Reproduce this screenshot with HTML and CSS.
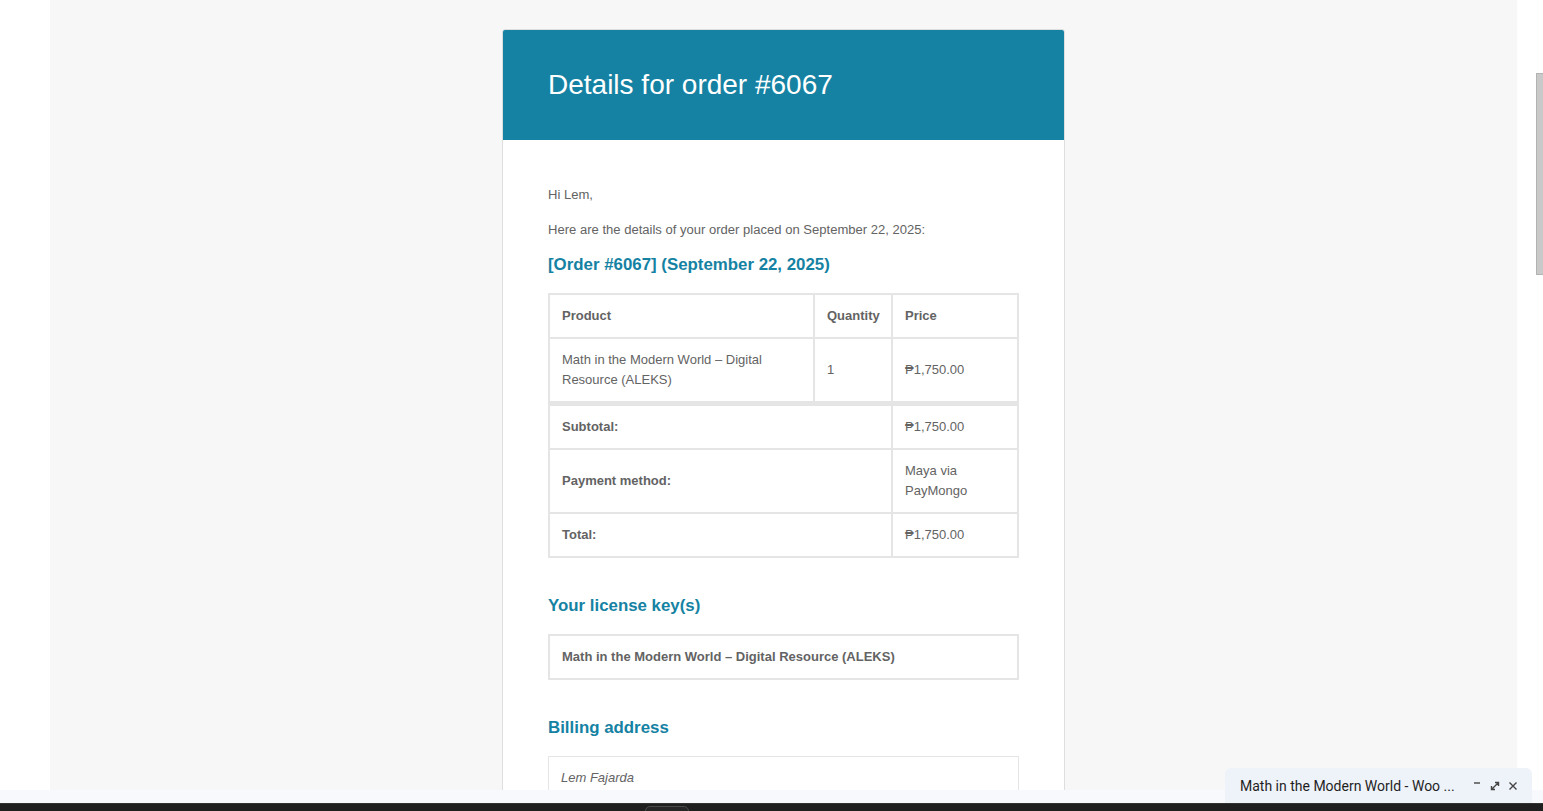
FILE: index.html
```html
<!DOCTYPE html>
<html lang="en">
<head>
<meta charset="utf-8">
<title>Details for order #6067</title>
<link rel="stylesheet" href="styles.css">
</head>
<body>
<div class="screen">
  <div class="viewport">
    <div class="gutter-left"></div>
    <div class="mail-bg">
      <div class="card">
        <div class="card-header">
          <h1 class="title">Details for order #6067</h1>
        </div>
        <div class="card-body">
          <p class="para">Hi Lem,</p>
          <p class="para">Here are the details of your order placed on September 22, 2025:</p>
          <h2 class="heading heading-first">[Order #6067] (September 22, 2025)</h2>
          <table class="order">
            <thead>
              <tr>
                <th class="c-prod">Product</th>
                <th class="c-qty">Quantity</th>
                <th class="c-price">Price</th>
              </tr>
            </thead>
            <tbody>
              <tr>
                <td class="cell-tall">Math in the Modern World – Digital Resource (ALEKS)</td>
                <td>1</td>
                <td>₱1,750.00</td>
              </tr>
            </tbody>
            <tfoot>
              <tr class="first-foot">
                <th colspan="2">Subtotal:</th>
                <td>₱1,750.00</td>
              </tr>
              <tr>
                <th colspan="2">Payment method:</th>
                <td>Maya via PayMongo</td>
              </tr>
              <tr>
                <th colspan="2">Total:</th>
                <td>₱1,750.00</td>
              </tr>
            </tfoot>
          </table>
          <h2 class="heading heading-gap">Your license key(s)</h2>
          <div class="license-box">Math in the Modern World – Digital Resource (ALEKS)</div>
          <h2 class="heading heading-gap">Billing address</h2>
          <div class="address-box"><em>Lem Fajarda</em></div>
        </div>
      </div>
    </div>
    <div class="gutter-right">
      <div class="scroll-thumb"></div>
    </div>
  </div>
  <div class="light-bar"></div>
  <div class="dark-bar"><div class="dark-tab"></div></div>
  <div class="chat">
    <span class="chat-title">Math in the Modern World - Woo ...</span>
    <div class="chat-icons">
      <svg class="ico" viewBox="0 0 12 12" width="12" height="12"><path d="M3 3h6" stroke="#444" stroke-width="1.4" fill="none"/></svg>
      <svg class="ico" viewBox="0 0 12 12" width="12" height="12"><path d="M2.5 9.5L9.5 2.5M6 2.5h3.5V6M2.5 6v3.5H6" stroke="#444" stroke-width="1.4" fill="none"/></svg>
      <svg class="ico" viewBox="0 0 12 12" width="12" height="12"><path d="M2.5 2.5l7 7M9.5 2.5l-7 7" stroke="#444" stroke-width="1.4" fill="none"/></svg>
    </div>
  </div>
</div>
</body>
</html>
```

FILE: styles.css
```css
* { box-sizing: border-box; }
html, body { margin: 0; padding: 0; }
body {
  width: 1543px;
  height: 811px;
  overflow: hidden;
  background: #ffffff;
  font-family: "Liberation Sans", Arial, sans-serif;
}
.screen {
  position: relative;
  width: 1543px;
  height: 811px;
  display: flex;
  flex-direction: column;
}
.viewport {
  display: flex;
  height: 790px;
  overflow: hidden;
}
.gutter-left { width: 50px; background: #ffffff; flex: none; }
.mail-bg {
  width: 1467px;
  flex: none;
  background: #f7f7f7;
  padding-top: 29px;
  display: flex;
  justify-content: center;
  align-items: flex-start;
}
.gutter-right {
  width: 26px;
  flex: none;
  background: #ffffff;
  position: relative;
}
.scroll-thumb {
  position: absolute;
  left: 19px;
  top: 73px;
  width: 7px;
  height: 202px;
  background: #c9c9c9;
  border: 1px solid #b3b3b3;
  border-right: none;
}
.card {
  width: 563px;
  background: #ffffff;
  border: 1px solid #dedede;
  border-radius: 3px;
  overflow: hidden;
  flex: none;
}
.card-header {
  background: #1582a3;
  height: 110px;
  padding: 0 45px;
  display: flex;
  align-items: center;
}
.title {
  margin: 0;
  color: #ffffff;
  font-size: 28px;
  font-weight: 400;
  line-height: 1.2;
}
.card-body {
  padding: 45px 45px 40px 45px;
  color: #636363;
  font-size: 13px;
}
.para {
  margin: 0 0 15px;
  line-height: 20px;
  font-size: 13.05px;
}
.heading {
  margin: 0 0 17px;
  color: #1582a3;
  font-size: 16.85px;
  font-weight: 700;
  line-height: 20px;
}
.heading-first { margin-bottom: 18px; }
.heading-gap { margin-top: 38px; margin-bottom: 18px; }
.order {
  width: 100%;
  border: 1px solid #e5e5e5;
  border-collapse: separate;
  border-spacing: 0;
  table-layout: fixed;
}
.order th, .order td {
  border: 1px solid #e5e5e5;
  padding: 11px 12px;
  line-height: 20px;
  text-align: left;
  vertical-align: middle;
  font-size: 13px;
}
.order th { font-weight: 700; }
.c-prod { width: 265px; }
.c-qty { width: 78px; }
.first-foot th, .first-foot td { border-top-width: 4px; }
.license-box {
  border: 2px solid #e5e5e5;
  padding: 11px 12px;
  font-weight: 700;
  line-height: 20px;
}
.address-box {
  border: 1px solid #e5e5e5;
  padding: 11px 12px 12px;
  line-height: 20px;
}
.light-bar { height: 13px; background: #f8f9fd; }
.dark-bar {
  height: 8px;
  background: #1f1f1f;
  position: relative;
  border-top: 1px solid #333333;
}
.dark-tab {
  position: absolute;
  left: 645px;
  top: 2px;
  width: 44px;
  height: 10px;
  border: 1px solid #4a4a4a;
  border-radius: 6px;
  background: #262626;
}
.chat {
  position: absolute;
  left: 1225px;
  top: 768px;
  width: 307px;
  height: 35px;
  background: #eef2f9;
  border-radius: 6px 6px 0 0;
  display: flex;
  align-items: center;
  padding: 0 13px 0 15px;
  font-family: Roboto, "Liberation Sans", sans-serif;
}
.chat-title {
  font-size: 14px;
  color: #1f1f1f;
  flex: 1;
  white-space: nowrap;
}
.chat-icons { display: flex; gap: 6px; align-items: center; }
.ico { display: block; }
```
